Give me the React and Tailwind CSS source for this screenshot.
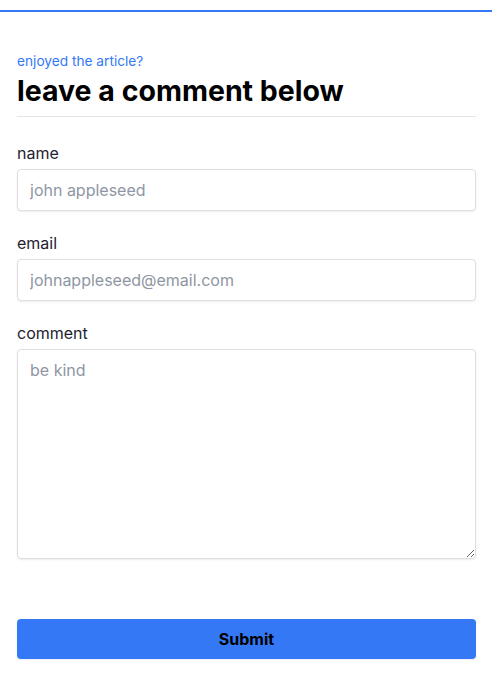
export default function App() {
  return (
    <div className="min-h-screen bg-white font-['Inter','Liberation_Sans',sans-serif]">
      <div className="pt-[10px]">
        <div className="h-[2px] bg-[#3478f6]" />
      </div>

      <form className="pl-[17px] pr-4 pt-[41px]" onSubmit={(e) => e.preventDefault()}>
        <div className="text-[13.7px] leading-[17px] text-[#3478f6]">enjoyed the article?</div>
        <h1 className="mt-[3px] text-[28.5px] leading-[35px] font-bold text-black">
          leave a comment below
        </h1>
        <div className="mt-2 h-px bg-[#e4e4ea]" />

        <label className="mt-[26px] block text-[16px] leading-[20px] text-[#1f2330]">name</label>
        <input
          type="text"
          placeholder="john appleseed"
          className="mt-[6px] block h-[42px] w-full rounded-[4px] border border-[#dedee4] px-3 text-[16px] text-[#1f2330] shadow-[0_1px_2px_rgba(0,0,0,0.08)] outline-none placeholder:text-[#8f96a3]"
        />

        <label className="mt-[22px] block text-[16px] leading-[20px] text-[#1f2330]">email</label>
        <input
          type="email"
          placeholder="johnappleseed@email.com"
          className="mt-[6px] block h-[42px] w-full rounded-[4px] border border-[#dedee4] px-3 text-[16px] text-[#1f2330] shadow-[0_1px_2px_rgba(0,0,0,0.08)] outline-none placeholder:text-[#8f96a3]"
        />

        <label className="mt-[22px] block text-[16px] leading-[20px] text-[#1f2330]">comment</label>
        <textarea
          placeholder="be kind"
          className="mt-[6px] block h-[210px] w-full rounded-[4px] border border-[#dedee4] px-3 py-[10px] text-[16px] leading-[20px] text-[#1f2330] shadow-[0_1px_2px_rgba(0,0,0,0.08)] outline-none placeholder:text-[#8f96a3]"
        />

        <button
          type="submit"
          className="mt-[60px] block h-[40px] w-full rounded-[4px] bg-[#3478f6] text-[16px] font-bold text-black shadow-[0_1px_2px_rgba(0,0,0,0.08)]"
        >
          Submit
        </button>
      </form>
    </div>
  );
}
